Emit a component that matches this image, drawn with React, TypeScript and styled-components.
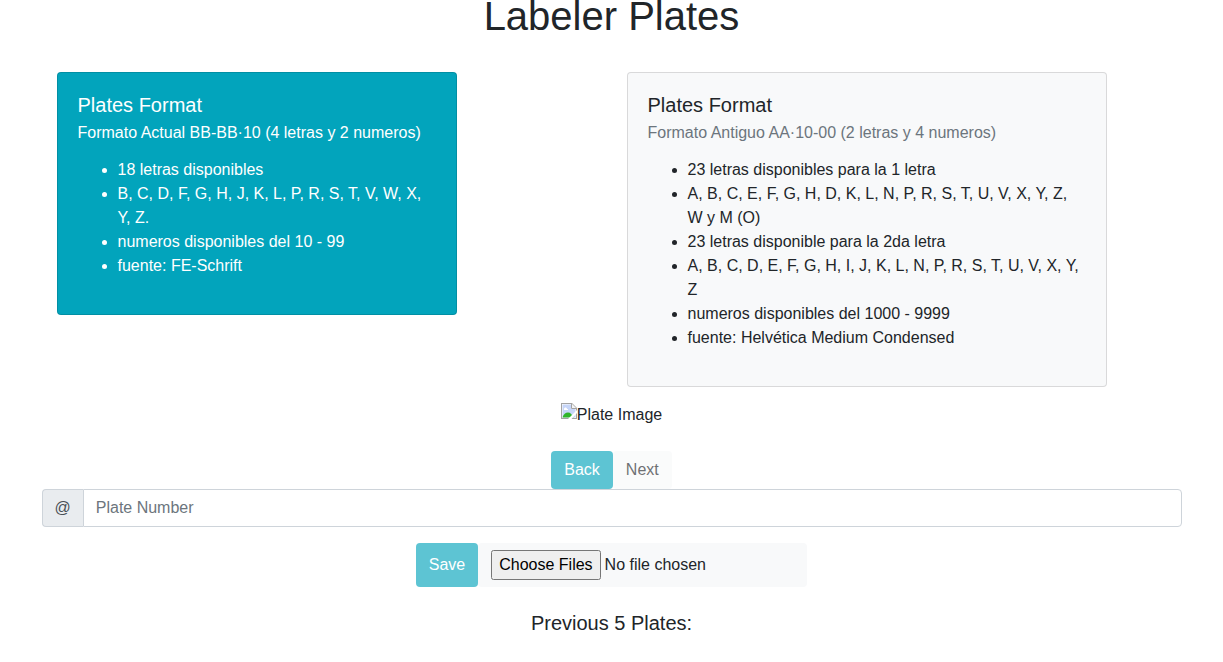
import React from "react";
import styled, { createGlobalStyle, css } from "styled-components";

const GlobalStyle = createGlobalStyle`
  *, *::before, *::after { box-sizing: border-box; }
  body {
    margin: 0;
    background: #fff;
    color: #212529;
    font-family: "Liberation Sans", Arial, sans-serif;
    font-size: 16px;
    line-height: 24px;
  }
`;

const Container = styled.main`
  max-width: 1140px;
  margin: 0 auto;
  display: flex;
  flex-direction: column;
  align-items: center;
`;

const PageTitle = styled.h1`
  margin: 0 0 40px;
  font-size: 40px;
  font-weight: 500;
  line-height: 32px;
`;

const FormatRow = styled.section`
  display: grid;
  grid-template-columns: 1fr 1fr;
  align-items: start;
  width: 100%;
`;

const FormatCard = styled.article<{ $info?: boolean }>`
  max-width: ${(p) => (p.$info ? "400px" : "480px")};
  margin: 0 15px;
  padding: 20px;
  border: 1px solid rgba(0, 0, 0, 0.125);
  border-radius: 4px;
  background: ${(p) => (p.$info ? "#02a4bc" : "#f8f9fa")};
  color: ${(p) => (p.$info ? "#fff" : "#212529")};
`;

const CardTitle = styled.h2`
  margin: 0 0 6px;
  font-size: 20px;
  font-weight: 500;
  line-height: 24px;
`;

const CardSubtitle = styled.h3<{ $muted?: boolean }>`
  margin: 0 0 16px;
  font-size: 16px;
  font-weight: 500;
  line-height: 19px;
  color: ${(p) => (p.$muted ? "#6c757d" : "inherit")};
`;

const FormatList = styled.ul`
  margin: 0 0 16px;
  padding-left: 40px;
`;

const PlateFigure = styled.div`
  display: flex;
  align-items: flex-start;
  margin: 16px 0 24px;
`;

const ButtonGroup = styled.div`
  display: flex;
`;

const buttonBox = css`
  padding: 6px 12px;
  border: 1px solid transparent;
  border-radius: 4px;
  font: inherit;
`;

const Button = styled.button<{ $variant: "info" | "light" }>`
  ${buttonBox}
  background: ${(p) => (p.$variant === "info" ? "#08a5bc" : "#f8f9fa")};
  color: ${(p) => (p.$variant === "info" ? "#fff" : "#212529")};
  &:disabled { opacity: 0.65; }
`;

const InputGroup = styled.div`
  display: flex;
  width: 100%;
  margin-bottom: 16px;
`;

const InputPrefix = styled.label`
  padding: 6px 12px;
  border: 1px solid #ced4da;
  border-right: 0;
  border-radius: 4px 0 0 4px;
  background: #e9ecef;
  color: #495057;
`;

const TextInput = styled.input`
  flex: 1;
  min-width: 0;
  padding: 6px 12px;
  border: 1px solid #ced4da;
  border-radius: 0 4px 4px 0;
  color: #495057;
  font: inherit;
  &::placeholder { color: #6c757d; opacity: 1; }
`;

const FileField = styled.label`
  ${buttonBox}
  display: flex;
  background: #f8f9fa;
`;

const FileInput = styled.input`
  font: inherit;
  &::file-selector-button { padding: 4px 6px; }
`;

const RecentTitle = styled.h2`
  margin: 24px 0;
  font-size: 20px;
  font-weight: 500;
  line-height: 24px;
`;

const BrokenImageIcon = () => (
  <svg width="16" height="16" viewBox="0 0 16 16" aria-hidden="true">
    <path d="M0 0h11l5 5v11H0z" fill="#a3a3a3" />
    <path d="M1 1h9.500L15 5.500V15H1z" fill="#fff" />
    <path d="M1.500 1.500h8.500v4.500h4.500v8.500H1.500z" fill="#c6d5f8" />
    <path d="M11 1v4h4z" fill="#f4f4f4" />
    <path d="M10.500 0v5.500H16" fill="none" stroke="#a3a3a3" />
    <path d="M3 6c0-2 3-2 3 0h1v1H3z" fill="#fff" />
    <path d="M1.500 14.500c1-3.500 3-5 5.500-5s4 2 5.500 5z" fill="#2fb52a" />
    <path d="M16 7v3l-5.500 6H7z" fill="#fff" />
  </svg>
);

const currentFormat = [
  "18 letras disponibles",
  "B, C, D, F, G, H, J, K, L, P, R, S, T, V, W, X, Y, Z.",
  "numeros disponibles del 10 - 99",
  "fuente: FE-Schrift",
];

const oldFormat = [
  "23 letras disponibles para la 1 letra",
  "A, B, C, E, F, G, H, D, K, L, N, P, R, S, T, U, V, X, Y, Z, W y M (O)",
  "23 letras disponible para la 2da letra",
  "A, B, C, D, E, F, G, H, I, J, K, L, N, P, R, S, T, U, V, X, Y, Z",
  "numeros disponibles del 1000 - 9999",
  "fuente: Helvética Medium Condensed",
];

export default function App() {
  return (
    <>
      <GlobalStyle />
      <Container>
        <PageTitle>Labeler Plates</PageTitle>
        <FormatRow>
          <FormatCard $info>
            <CardTitle>Plates Format</CardTitle>
            <CardSubtitle>Formato Actual BB-BB·10 (4 letras y 2 numeros)</CardSubtitle>
            <FormatList>
              {currentFormat.map((item) => <li key={item}>{item}</li>)}
            </FormatList>
          </FormatCard>
          <FormatCard>
            <CardTitle>Plates Format</CardTitle>
            <CardSubtitle $muted>Formato Antiguo AA·10-00 (2 letras y 4 numeros)</CardSubtitle>
            <FormatList>
              {oldFormat.map((item) => <li key={item}>{item}</li>)}
            </FormatList>
          </FormatCard>
        </FormatRow>
        <PlateFigure>
          <BrokenImageIcon />
          <span>Plate Image</span>
        </PlateFigure>
        <ButtonGroup>
          <Button $variant="info" type="button" disabled>Back</Button>
          <Button $variant="light" type="button" disabled>Next</Button>
        </ButtonGroup>
        <InputGroup>
          <InputPrefix htmlFor="plate-number">@</InputPrefix>
          <TextInput id="plate-number" type="text" placeholder="Plate Number" />
        </InputGroup>
        <ButtonGroup>
          <Button $variant="info" type="button" disabled>Save</Button>
          <FileField>
            <FileInput type="file" multiple aria-label="Plate images" />
          </FileField>
        </ButtonGroup>
        <RecentTitle>Previous 5 Plates:</RecentTitle>
      </Container>
    </>
  );
}
